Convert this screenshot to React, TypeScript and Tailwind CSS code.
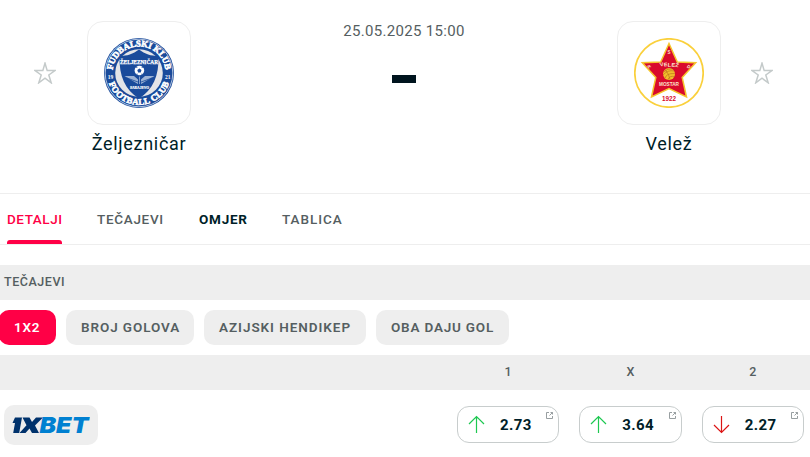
import React from "react";

function StarOutline() {
  return (
    <svg width="22" height="22" viewBox="0 0 22 22" fill="none" stroke="#c4caca" strokeWidth="1.500">
      <path d="M11 1.200 L13.200 8.600 H21 L14.800 13 L17.200 20.800 L11 16.200 L4.800 20.800 L7.200 13 L1 8.600 H8.800 Z" />
    </svg>
  );
}

function ZeljeznicarCrest() {
  return (
    <svg width="70" height="70" viewBox="0 0 70 70" fontFamily="Liberation Serif, serif" fontWeight="700" fill="#fff" textAnchor="middle">
      <defs>
        <path id="arc-top" d="M8.400 35 A26.600 26.600 0 0 1 61.600 35" />
        <path id="arc-bottom" d="M3.200 35 A31.800 31.800 0 0 0 66.800 35" />
      </defs>
      <circle cx="35" cy="35" r="35" fill="#1a4b9b" />
      <circle cx="35" cy="35" r="33.800" fill="none" stroke="#d5dfef" strokeWidth="0.800" />
      <circle cx="35" cy="35" r="23.800" fill="#e4e5e8" />
      <path d="M35 11.500 C29 16 23 18 15.500 18 C15 38 21 52 35 60.500 C49 52 55 38 54.500 18 C47 18 41 16 35 11.500 Z" fill="#1a4b9b" />
      <text fontSize="8.800" stroke="#fff" strokeWidth="0.600">
        <textPath href="#arc-top" startOffset="50%" textLength="77">FUDBALSKI KLUB</textPath>
      </text>
      <text fontSize="8.800" stroke="#fff" strokeWidth="0.600">
        <textPath href="#arc-bottom" startOffset="50%" textLength="79">FOOTBALL CLUB</textPath>
      </text>
      <text x="6.500" y="40.500" fontSize="5.500">19</text>
      <text x="63.800" y="40.500" fontSize="5.500">21</text>
      <text x="35" y="26.300" fontSize="5.600" stroke="#fff" strokeWidth="0.250" textLength="38" lengthAdjust="spacingAndGlyphs">ŽELJEZNIČAR</text>
      <circle cx="35.400" cy="32.500" r="4.800" />
      <path d="M35.400 30.600 L37.500 32.100 L36.700 34.500 H34.100 L33.300 32.100 Z M31 29.500 l2 -1.200 l0.500 1.500z M40 29.500 l-2 -1.200 l-0.500 1.500z M32 36.100 l1.500 -0.600 v1.400z M39 36.100 l-1.500 -0.600 v1.400z" fill="#1a4b9b" />
      <path d="M20.500 38 H30 L34 41.500 V46 Z M50.500 38 H41 L37 41.500 V46 Z" fill="#9db3d5" />
      <path d="M23 40 L34 44 M48 40 L37 44" stroke="#1a4b9b" strokeWidth="0.800" />
      <path d="M35.500 38.500 V46" stroke="#9db3d5" strokeWidth="0.800" />
      <text x="35.500" y="51.300" fontSize="4.300" stroke="#fff" strokeWidth="0.200" textLength="19" lengthAdjust="spacingAndGlyphs">SARAJEVO</text>
    </svg>
  );
}

function VelezCrest() {
  return (
    <svg width="70" height="70" viewBox="0 0 70 70" fontFamily="Liberation Sans, sans-serif" fontWeight="700" fill="#fbe3cd" textAnchor="middle">
      <circle cx="35" cy="35" r="34.200" fill="#fff" stroke="#fad03c" strokeWidth="1.700" />
      <path d="M35 5.500 L43.300 24 L61.700 24.800 L48.200 39.500 L52.500 59 L35 50.500 L17.500 59 L21.800 39.500 L8.300 24.800 L26.700 24 Z" fill="#d90a2c" stroke="#f5c52c" strokeWidth="1.500" />
      <text x="35" y="15.800" fontSize="4.500">S</text>
      <text x="15.500" y="30" fontSize="4.500" transform="rotate(-35 15.500 29)">R</text>
      <text x="54.500" y="30" fontSize="4.500" transform="rotate(35 54.500 29)">D</text>
      <text x="35.300" y="28.500" fontSize="5.200" textLength="18" lengthAdjust="spacingAndGlyphs" rotate="-14 -7 0 7 14">VELEŽ</text>
      <circle cx="35" cy="36" r="6" fill="#f2bd2b" />
      <path d="M29.500 34 Q34 30 38 31 M29 37 Q34 31.500 40 33 M31 40.500 Q32 35 40.800 35.500 M34 41.800 Q35 37.500 41 38.500 M31.500 32 Q35 36 36 41.500" fill="none" stroke="#b36b1d" strokeWidth="0.600" />
      <text x="35" y="47.800" fontSize="4.800" textLength="20" lengthAdjust="spacingAndGlyphs">MOSTAR</text>
      <text x="35" y="62.600" fontSize="6.600" fill="#d90a2c" textLength="14" lengthAdjust="spacingAndGlyphs">1922</text>
    </svg>
  );
}

function Team({ name, children }: { name: string; children: React.ReactNode }) {
  return (
    <div className="flex w-[104px] flex-col items-center">
      <div className="flex h-[104px] w-[104px] items-center justify-center rounded-[16px] border border-[#eeeeee] bg-white">{children}</div>
      <div className="mt-[7px] whitespace-nowrap text-[18px] leading-6 tracking-[0.7px] text-[#001e28]">{name}</div>
    </div>
  );
}

const tabs = [
  { label: "DETALJI", style: "w-[55px] text-[#ff0046] tracking-[0.55px]", active: true },
  { label: "TEČAJEVI", style: "w-[66px] text-[#555e61] tracking-[0.7px]" },
  { label: "OMJER", style: "w-[49px] pl-px text-[#001e28] font-bold tracking-[0.75px]" },
  { label: "TABLICA", style: "w-[60px] text-[#555e61] tracking-[0.95px]" },
];

const pills = [
  { label: "1X2", style: "-ml-px w-[57px] bg-[#ff0046] text-white tracking-[0.8px]" },
  { label: "BROJ GOLOVA", style: "w-[128px] bg-[#eeeeee] text-[#555e61] tracking-[0.9px]" },
  { label: "AZIJSKI HENDIKEP", style: "w-[162px] bg-[#eeeeee] text-[#555e61] tracking-[0.95px]" },
  { label: "OBA DAJU GOL", style: "w-[133px] bg-[#eeeeee] text-[#555e61] tracking-[0.8px]" },
];

function Odd({ value, up }: { value: string; up: boolean }) {
  return (
    <div className="relative flex h-[37px] flex-1 items-center rounded-[12px] border border-[#c8cdcd] pl-[10px]">
      <svg width="18" height="19" viewBox="0 0 18 19" fill="none" stroke={up ? "#1ec851" : "#dc1414"} strokeWidth="1.200">
        <path d={up ? "M8.500 18 V1.500 M1 9 L8.500 1.500 L16 9" : "M8.500 1 V17.500 M1 10 L8.500 17.500 L16 10"} />
      </svg>
      <span className="ml-[14px] text-[15px] font-bold leading-5 tracking-[0.4px] text-[#001e28]">{value}</span>
      <svg className="absolute right-[4px] top-[4px]" width="9" height="9" viewBox="0 0 9 9" fill="none" stroke="#8c9496" strokeWidth="0.900">
        <path d="M4 1.500 H1.500 V7.500 H7.500 V5 M5.500 1.500 H7.500 V3.500 M7.500 1.500 L4.500 4.500" />
      </svg>
    </div>
  );
}

export default function App() {
  return (
    <div className="h-[457px] w-[810px] overflow-hidden bg-white font-['Roboto','Noto_Sans',sans-serif]">
      <header className="flex h-[193px] items-start pt-[21px]">
        <div className="ml-[34px] mt-[41px]"><StarOutline /></div>
        <div className="ml-[31px]"><Team name="Željezničar"><ZeljeznicarCrest /></Team></div>
        <div className="flex flex-1 flex-col items-center">
          <div className="text-[15px] leading-5 tracking-[0.33px] text-[#555e61]">25.05.2025 15:00</div>
          <div className="mr-px mt-[34px] h-[8px] w-[24px] bg-[#00141e]" />
        </div>
        <div className="mr-[30px]"><Team name="Velež"><VelezCrest /></Team></div>
        <div className="mr-[37px] mt-[41px]"><StarOutline /></div>
      </header>

      <nav className="flex h-[52px] gap-[35px] border-y border-[#eeeeee] pl-[7px] text-[13.500px] font-medium">
        {tabs.map((tab) => (
          <div key={tab.label} className={`flex h-[50px] flex-col justify-between whitespace-nowrap ${tab.style}`}>
            <span className="mt-[16px] leading-[19px]">{tab.label}</span>
            {tab.active && <span className="h-[4px] rounded-t-[3px] bg-[#ff0046]" />}
          </div>
        ))}
      </nav>

      <div className="mt-5 flex h-[35px] items-center bg-[#eeeeee] pb-px pl-1 text-[12.500px] font-medium leading-[18px] tracking-[0.55px] text-[#555e61]">TEČAJEVI</div>

      <div className="flex gap-[10px] py-[10px]">
        {pills.map((pill) => (
          <div key={pill.label} className={`flex h-[35px] items-center whitespace-nowrap rounded-[10px] pl-[15px] text-[13.500px] font-semibold ${pill.style}`}>{pill.label}</div>
        ))}
      </div>

      <div className="flex h-[35px] items-center gap-[20px] bg-[#eeeeee] pb-px pl-[457px] pr-[6px] text-center text-[12.500px] font-medium leading-[18px] text-[#555e61]">
        <span className="flex-1">1</span>
        <span className="flex-1">X</span>
        <span className="flex-1">2</span>
      </div>

      <div className="flex items-start pl-1 pr-[6px] pt-[15px]">
        <div className="flex h-10 w-[94px] items-center justify-center rounded-[10px] bg-[#eeeeee]">
          <svg width="78" height="24" viewBox="0 -3 78 24" fontFamily="Inter, sans-serif" fontWeight="900" fontStyle="italic" fontSize="22">
            <path d="M3 1.500 H10 L7.200 17 H1.200 L3 7 H0.500 Z" fill="#00326c" />
            <path d="M10.500 1.500 H17.500 L20 6 L24 1.500 H31 L23 9.500 L27 17 H20 L17.500 12.500 L13.500 17 H7.500 L14.500 9.300 Z" fill="#00326c" />
            <text x="27.500" y="17" fill="#0080d1" textLength="49" lengthAdjust="spacingAndGlyphs">BET</text>
          </svg>
        </div>
        <div className="ml-[359px] mt-px flex flex-1 gap-[20px]">
          <Odd value="2.73" up />
          <Odd value="3.64" up />
          <Odd value="2.27" up={false} />
        </div>
      </div>
    </div>
  );
}
